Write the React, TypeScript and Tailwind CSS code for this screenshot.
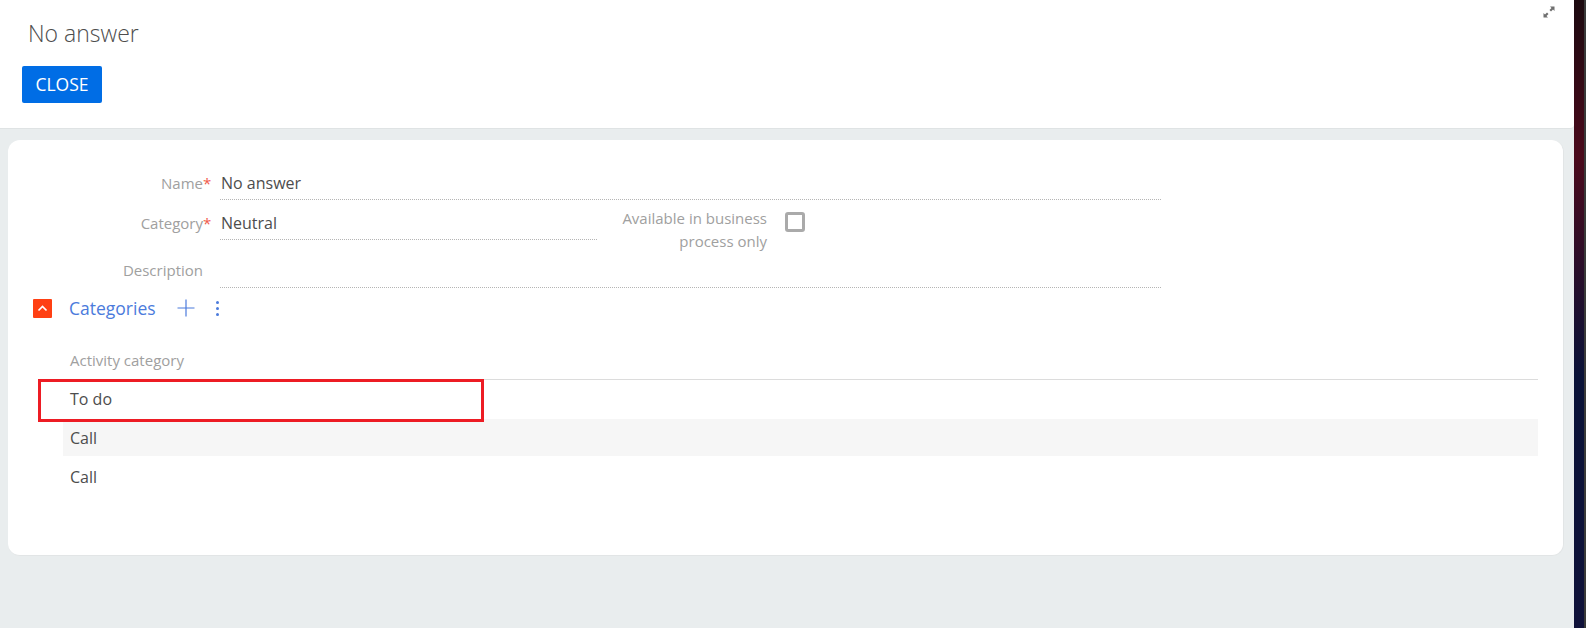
const font = "font-['Open_Sans',sans-serif]";

function Dotted({ className }: { className: string }) {
  return <div className={`border-b border-dotted border-[#b5b5b5] ${className}`} />;
}

function Label({ text, required }: { text: string; required?: boolean }) {
  return (
    <div className="flex w-[212px] shrink-0 justify-end pr-[9px] text-[15px] leading-[20px] text-[#a0a0a0]">
      <span className={required ? "" : "pr-[8px]"}>{text}</span>
      {required && <span className="w-[8px] text-[#f15a4a]">*</span>}
    </div>
  );
}

function ExpandIcon() {
  return (
    <svg width="12" height="12" viewBox="0 0 12 12" fill="#6f6f6f">
      <path d="M7 0.5h4.5V5L10 3.5 8 5.5 6.5 4 8.500 2z" />
      <path d="M5 11.500H0.500V7L2 8.500 4 6.500 5.500 8 3.500 10z" />
    </svg>
  );
}

export default function App() {
  return (
    <div className={`flex h-[628px] w-[1586px] overflow-hidden ${font}`}>
      <div className="flex w-[1574px] shrink-0 flex-col bg-[#e9edee]">
        <header className="relative h-[129px] shrink-0 rounded-br-[4px] border-b border-[#dfe3e4] bg-white pl-[22px] pr-[4px]">
          <h1 className="pl-[6px] pt-[17px] text-[23px] font-light leading-[32px] text-[#4d4d4d]">No answer</h1>
          <button className="mt-[17px] h-[37px] w-[80px] rounded-[2px] bg-[#006de5] text-[17.500px] leading-[37px] text-white">
            CLOSE
          </button>
          <div className="absolute right-[19px] top-[6px]">
            <ExpandIcon />
          </div>
        </header>

        <main className="ml-[8px] mt-[11px] h-[416px] w-[1556px] rounded-[12px] border-b border-r border-[#e2e5e6] bg-white pt-[27px]">
          <div className="flex h-[33px]">
            <div className="pt-[6px]">
              <Label text="Name" required />
            </div>
            <div className="w-[941px]">
              <div className="h-[32px] pl-[1px] text-[16px] leading-[32px] text-[#4d4d4d]">No answer</div>
              <Dotted className="w-full" />
            </div>
          </div>

          <div className="mt-[7px] flex h-[48px]">
            <div className="pt-[6px]">
              <Label text="Category" required />
            </div>
            <div className="w-[377px]">
              <div className="h-[32px] pl-[1px] text-[16px] leading-[32px] text-[#4d4d4d]">Neutral</div>
              <Dotted className="w-full" />
            </div>
            <div className="w-[170px] text-right text-[15px] leading-[23px] text-[#a0a0a0]">
              Available in business
              <br />
              process only
            </div>
            <div className="ml-[18px] mt-[5px] h-[20px] w-[20px] rounded-[3px] border-[3px] border-[#aaaaaa]" />
          </div>

          <div className="flex h-[33px]">
            <div className="pt-[5px]">
              <Label text="Description" />
            </div>
            <div className="flex w-[941px] flex-col justify-end">
              <Dotted className="w-full" />
            </div>
          </div>

          <div className="mt-[10px] flex h-[20px] items-center">
            <div className="ml-[25px] flex h-[19px] w-[19px] items-center justify-center rounded-[1px] bg-[#ff4013]">
              <svg width="11" height="7" viewBox="0 0 11 7" fill="none" stroke="white" strokeWidth="1.700">
                <path d="M1.500 5.500 5.500 1.500 9.500 5.500" />
              </svg>
            </div>
            <span className="ml-[17px] text-[17.500px] leading-[20px] text-[#4b7bdc]">Categories</span>
            <svg className="ml-[21px]" width="18" height="18" viewBox="0 0 18 18" fill="none" stroke="#4b7bdc" strokeWidth="1.200">
              <path d="M9 0.500V17.500M0.500 9H17.500" />
            </svg>
            <div className="ml-[21px] flex flex-col gap-[3px]">
              <span className="h-[3px] w-[3px] rounded-full bg-[#4b7bdc]" />
              <span className="h-[3px] w-[3px] rounded-full bg-[#4b7bdc]" />
              <span className="h-[3px] w-[3px] rounded-full bg-[#4b7bdc]" />
            </div>
          </div>

          <section className="relative ml-[55px] mt-[32px] w-[1475px]">
            <div className="h-[30px] border-b border-[#dcdcdc] pl-[7px] text-[15px] leading-[20px] text-[#a0a0a0]">
              Activity category
            </div>
            <div className="h-[39px] pl-[7px] text-[16px] leading-[39px] text-[#4d4d4d]">To do</div>
            <div className="h-[37px] bg-[#f6f6f6] pl-[7px] text-[16px] leading-[38px] text-[#4d4d4d]">Call</div>
            <div className="mt-[2px] h-[39px] pl-[7px] text-[16px] leading-[39px] text-[#4d4d4d]">Call</div>
            <div className="absolute left-[-25px] top-[29px] h-[43px] w-[446px] border-[3px] border-[#ed1c24]" />
          </section>
        </main>
      </div>
      <div className="h-full w-[10px] shrink-0 bg-[linear-gradient(180deg,#1c0a10_0%,#4b0a1c_25%,#0a1238_60%,#10123a_100%)]" />
      <div className="h-full w-[2px] shrink-0 bg-[#3a3a3a]" />
    </div>
  );
}
